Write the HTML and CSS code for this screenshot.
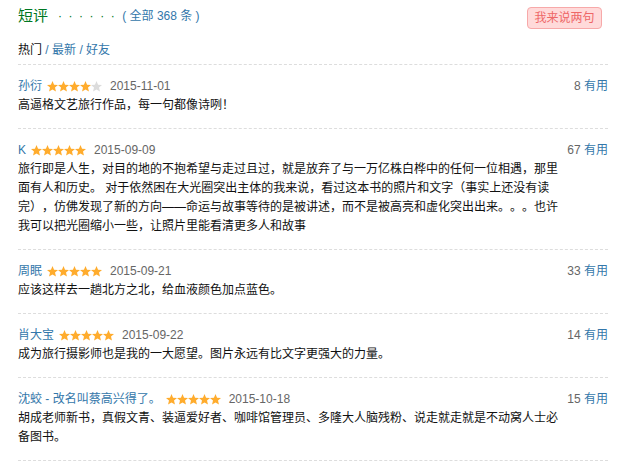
FILE: index.html
```html
<!DOCTYPE html>
<html lang="zh-CN">
<head>
<meta charset="utf-8">
<title>短评</title>
<link rel="stylesheet" href="styles.css">
</head>
<body>
<svg class="defs" width="0" height="0" aria-hidden="true">
  <symbol id="star" viewBox="0 0 11 11">
    <path d="M5.5 0 L7.05 3.7 L11 4.0 L8.0 6.6 L8.95 10.6 L5.5 8.5 L2.05 10.6 L3.0 6.6 L0 4.0 L3.95 3.7Z"/>
  </symbol>
</svg>
<div class="page">
  <header class="head">
    <div class="title-group">
      <h2 class="title">短评</h2>
      <span class="dots">· · · · · ·</span>
      <span class="count">( 全部 368 条 )</span>
    </div>
    <a class="btn">我来说两句</a>
  </header>
  <nav class="tabs"><span class="tab-on">热门</span> / <a class="tab">最新</a> / <a class="tab">好友</a></nav>
  <ul class="comments">
    <li class="comment">
      <div class="meta">
        <div class="info">
          <a class="name">孙衍</a>
          <svg class="stars" width="55" height="11" viewBox="0 0 55 11"><use href="#star" x="0" width="11" height="11" class="on"/><use href="#star" x="11" width="11" height="11" class="on"/><use href="#star" x="22" width="11" height="11" class="on"/><use href="#star" x="33" width="11" height="11" class="on"/><use href="#star" x="44" width="11" height="11" class="off"/></svg>
          <span class="date">2015-11-01</span>
        </div>
        <span class="vote"><span class="num">8</span> <a class="useful">有用</a></span>
      </div>
      <p class="text">高逼格文艺旅行作品，每一句都像诗咧！</p>
    </li>
    <li class="comment">
      <div class="meta">
        <div class="info">
          <a class="name">K</a>
          <svg class="stars" width="55" height="11" viewBox="0 0 55 11"><use href="#star" x="0" width="11" height="11" class="on"/><use href="#star" x="11" width="11" height="11" class="on"/><use href="#star" x="22" width="11" height="11" class="on"/><use href="#star" x="33" width="11" height="11" class="on"/><use href="#star" x="44" width="11" height="11" class="on"/></svg>
          <span class="date">2015-09-09</span>
        </div>
        <span class="vote"><span class="num">67</span> <a class="useful">有用</a></span>
      </div>
      <p class="text">旅行即是人生，对目的地的不抱希望与走过且过，就是放弃了与一万亿株白桦中的任何一位相遇，那里面有人和历史。 对于依然困在大光圈突出主体的我来说，看过这本书的照片和文字（事实上还没有读完），仿佛发现了新的方向——命运与故事等待的是被讲述，而不是被高亮和虚化突出出来。。。也许我可以把光圈缩小一些，让照片里能看清更多人和故事</p>
    </li>
    <li class="comment">
      <div class="meta">
        <div class="info">
          <a class="name">周眠</a>
          <svg class="stars" width="55" height="11" viewBox="0 0 55 11"><use href="#star" x="0" width="11" height="11" class="on"/><use href="#star" x="11" width="11" height="11" class="on"/><use href="#star" x="22" width="11" height="11" class="on"/><use href="#star" x="33" width="11" height="11" class="on"/><use href="#star" x="44" width="11" height="11" class="on"/></svg>
          <span class="date">2015-09-21</span>
        </div>
        <span class="vote"><span class="num">33</span> <a class="useful">有用</a></span>
      </div>
      <p class="text">应该这样去一趟北方之北，给血液颜色加点蓝色。</p>
    </li>
    <li class="comment">
      <div class="meta">
        <div class="info">
          <a class="name">肖大宝</a>
          <svg class="stars" width="55" height="11" viewBox="0 0 55 11"><use href="#star" x="0" width="11" height="11" class="on"/><use href="#star" x="11" width="11" height="11" class="on"/><use href="#star" x="22" width="11" height="11" class="on"/><use href="#star" x="33" width="11" height="11" class="on"/><use href="#star" x="44" width="11" height="11" class="on"/></svg>
          <span class="date">2015-09-22</span>
        </div>
        <span class="vote"><span class="num">14</span> <a class="useful">有用</a></span>
      </div>
      <p class="text">成为旅行摄影师也是我的一大愿望。图片永远有比文字更强大的力量。</p>
    </li>
    <li class="comment">
      <div class="meta">
        <div class="info">
          <a class="name">沈蛟 - 改名叫蔡高兴得了。</a>
          <svg class="stars" width="55" height="11" viewBox="0 0 55 11"><use href="#star" x="0" width="11" height="11" class="on"/><use href="#star" x="11" width="11" height="11" class="on"/><use href="#star" x="22" width="11" height="11" class="on"/><use href="#star" x="33" width="11" height="11" class="on"/><use href="#star" x="44" width="11" height="11" class="on"/></svg>
          <span class="date">2015-10-18</span>
        </div>
        <span class="vote"><span class="num">15</span> <a class="useful">有用</a></span>
      </div>
      <p class="text">胡成老师新书，真假文青、装逼爱好者、咖啡馆管理员、多隆大人脑残粉、说走就走就是不动窝人士必备图书。</p>
    </li>
  </ul>
</div>
</body>
</html>
```
FILE: styles.css
```css
html, body {
  margin: 0;
  background: #fff;
}
body {
  font: 12px/19px "Liberation Sans", "Noto Sans CJK SC", sans-serif;
  color: #111;
  text-spacing-trim: space-all;
}
.defs {
  display: block;
  width: 0;
  height: 0;
  overflow: hidden;
}
.page {
  width: 590px;
  padding: 7px 0 0 18px;
}
.head {
  display: flex;
  justify-content: space-between;
  align-items: flex-start;
  height: 22px;
  margin-bottom: 11px;
}
.title-group {
  display: flex;
  align-items: center;
  height: 18px;
}
.title {
  margin: 0;
  font-size: 15px;
  font-weight: normal;
  line-height: 18px;
  color: #072;
}
.dots {
  margin-left: 10px;
  color: #072;
  letter-spacing: 1.6px;
}
.count {
  margin-left: 6px;
  color: #37a;
}
.btn {
  box-sizing: border-box;
  width: 75px;
  height: 22px;
  margin-right: 6px;
  border: 1px solid #f7a9a9;
  border-radius: 4px;
  background: #ffdada;
  color: #ee6767;
  text-align: center;
  line-height: 20px;
  cursor: pointer;
}
.tabs {
  line-height: 20px;
  padding-bottom: 4px;
  border-bottom: 1px dashed #ddd;
  color: #37a;
}
.tab-on {
  color: #111;
}
.tab {
  color: #37a;
}
.comments {
  margin: 0;
  padding: 0;
  list-style: none;
}
.comment {
  padding: 11px 0 13px;
  border-bottom: 1px dashed #ddd;
}
.meta {
  display: flex;
  justify-content: space-between;
  align-items: center;
  height: 20px;
  line-height: 20px;
}
.info {
  display: flex;
  align-items: center;
}
.name {
  color: #37a;
}
.stars {
  display: block;
  margin-left: 5px;
}
.stars .on {
  fill: #ffac2d;
}
.stars .off {
  fill: #dcdcdc;
}
.date {
  margin-left: 8px;
  color: #666;
}
.vote .num {
  color: #666;
}
.useful {
  color: #37a;
}
.text {
  margin: 0;
  width: 542px;
  line-height: 19px;
}
```
